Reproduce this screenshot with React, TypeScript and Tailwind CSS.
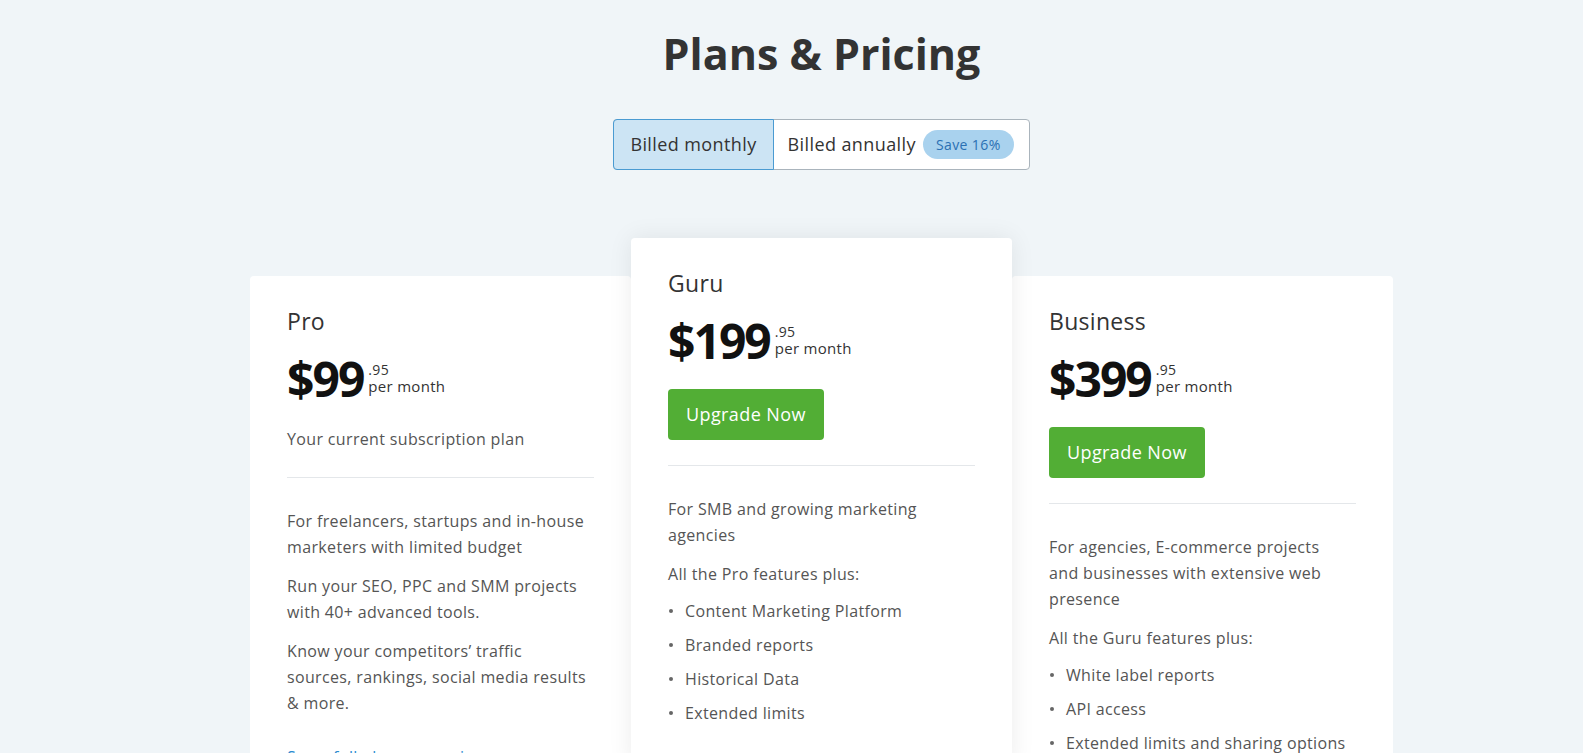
const font = { fontFamily: '"Open Sans", "Noto Sans", sans-serif' };

type Plan = {
  name: string;
  price: string;
  current?: boolean;
  intro: string[][];
  plus?: string;
  features?: string[];
  link?: boolean;
};

const plans: Plan[] = [
  {
    name: "Pro",
    price: "$99",
    current: true,
    intro: [
      ["For freelancers, startups and in-house", "marketers with limited budget"],
      ["Run your SEO, PPC and SMM projects", "with 40+ advanced tools."],
      ["Know your competitors’ traffic", "sources, rankings, social media results", "& more."],
    ],
    link: true,
  },
  {
    name: "Guru",
    price: "$199",
    intro: [["For SMB and growing marketing", "agencies"]],
    plus: "All the Pro features plus:",
    features: ["Content Marketing Platform", "Branded reports", "Historical Data", "Extended limits"],
  },
  {
    name: "Business",
    price: "$399",
    intro: [["For agencies, E-commerce projects", "and businesses with extensive web", "presence"]],
    plus: "All the Guru features plus:",
    features: ["White label reports", "API access", "Extended limits and sharing options"],
  },
];

function PlanCard({ plan, featured }: { plan: Plan; featured?: boolean }) {
  return (
    <div
      className={
        "w-[381px] bg-white rounded-[4px] px-[37px] pt-[30px] pb-10 " +
        (featured ? "relative z-10 shadow-[0_0_24px_rgba(0,0,0,0.08)]" : "mt-[38px]")
      }
    >
      <h2 className="text-[23px] leading-[30px] text-[#333] tracking-[0.3px]">{plan.name}</h2>
      <div className="flex items-start mt-[15px]">
        <span className="text-[48px] leading-[56px] font-bold text-[#111] tracking-[-2px]">{plan.price}</span>
        <div className="flex flex-col ml-[5px] mt-[11px] text-[#333] tracking-[0.3px]">
          <span className="text-[14px] leading-[15px]">.95</span>
          <span className="text-[15px] leading-[19px]">per month</span>
        </div>
      </div>
      {plan.current ? (
        <p className="mt-[19px] text-[16px] leading-[26px] text-[#555] tracking-[0.35px]">Your current subscription plan</p>
      ) : (
        <button className="mt-[20px] h-[51px] px-[18px] rounded-[4px] bg-[#52ae35] text-white text-[18px] tracking-[0.4px]">
          Upgrade Now
        </button>
      )}
      <div className="h-px bg-[#e4e7ea] mt-[25px]" />
      <div className="mt-[30px] text-[16px] leading-[26px] text-[#555] tracking-[0.35px]">
        {plan.intro.map((lines, i) => (
          <p key={i} className={i > 0 ? "mt-[13px]" : ""}>
            {lines.map((l, j) => (
              <span key={j} className="block">
                {l}
              </span>
            ))}
          </p>
        ))}
        {plan.plus && <p className="mt-[13px]">{plan.plus}</p>}
        {plan.features && (
          <ul className="mt-[11px] flex flex-col gap-[8px]">
            {plan.features.map((f) => (
              <li key={f} className="flex items-center">
                <span className="w-[4px] h-[4px] rounded-full bg-[#666] ml-[1px] mr-[12px]" />
                {f}
              </li>
            ))}
          </ul>
        )}
        {plan.link && (
          <a className="block mt-[28px] text-[#2a8ad0] underline">See a full plan comparison</a>
        )}
      </div>
    </div>
  );
}

export default function App() {
  return (
    <div className="h-[753px] overflow-hidden bg-[#f0f5f8] pl-[60px]" style={font}>
      <div className="flex flex-col items-center">
        <h1 className="mt-[26px] text-[43px] leading-[56px] font-bold text-[#333]">Plans &amp; Pricing</h1>
        <div className="mt-[37px] flex h-[51px] rounded-[4px] border border-[#aab4bc] bg-white text-[18px] text-[#333] tracking-[0.4px]">
          <div className="flex items-center px-[16px] -m-px border border-[#4a9bd2] bg-[#cce4f4] rounded-l-[4px]">
            Billed monthly
          </div>
          <div className="flex items-center pl-[15px] pr-[15px]">
            Billed annually
            <span className="ml-[7px] h-[29px] px-[13px] flex items-center rounded-full bg-[#a9d2ee] text-[14px] text-[#2b70b3] tracking-[0.4px]">
              Save 16%
            </span>
          </div>
        </div>
        <div className="mt-[68px] flex items-start">
          <PlanCard plan={plans[0]} />
          <PlanCard plan={plans[1]} featured />
          <PlanCard plan={plans[2]} />
        </div>
      </div>
    </div>
  );
}
